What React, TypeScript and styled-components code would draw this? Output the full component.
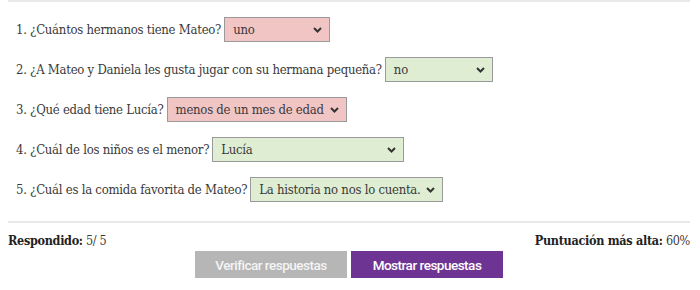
import React from "react";
import styled, { createGlobalStyle } from "styled-components";

const Global = createGlobalStyle`
  html, body { margin: 0; padding: 0; background: #fff; }
  body { font-family: "DejaVu Serif Condensed", "DejaVu Serif", "Liberation Serif", serif; color: #3a3a3a; }
`;

const Page = styled.div`
  margin: 0 10px 0 8px;
  border-top: 2px solid #e9e9e9;
  padding-top: 15px;
`;

const Questions = styled.ol`
  list-style: none;
  margin: 0;
  padding: 0 0 0 8px;
  display: flex;
  flex-direction: column;
  gap: 15px;
`;

const Row = styled.li`
  display: flex;
  align-items: center;
  gap: 3px;
  height: 25px;
  font-size: 13px;
  letter-spacing: -0.25px;
  white-space: nowrap;
`;

const SelectBox = styled.div<{ $ok: boolean; $w: number }>`
  box-sizing: border-box;
  width: ${(p) => p.$w}px;
  height: 25px;
  display: flex;
  align-items: center;
  justify-content: space-between;
  padding: 0 7px 0 8px;
  border: 1px solid #9a9a9a;
  background: ${(p) => (p.$ok ? "#dfeed3" : "#f2c5c5")};
  color: #3a3a3a;
  font-size: 13px;
  white-space: nowrap;
`;

const Divider = styled.hr`
  border: none;
  border-top: 2px solid #e9e9e9;
  margin: 19px 0 0 0;
`;

const Stats = styled.div`
  display: flex;
  justify-content: space-between;
  font-size: 12.5px;
  letter-spacing: -0.3px;
  margin-top: 10px;
  color: #3a3a3a;
  b { color: #222; }
`;

const Buttons = styled.div`
  display: flex;
  justify-content: center;
  gap: 4px;
  margin-top: 3px;
`;

const Btn = styled.button<{ $primary?: boolean }>`
  width: 152px;
  height: 27px;
  border: none;
  font-family: Roboto, "Liberation Sans", sans-serif;
  font-size: 13.5px;
  font-weight: 500;
  letter-spacing: -0.5px;
  color: ${(p) => (p.$primary ? "#fff" : "#f4f4f4")};
  background: ${(p) => (p.$primary ? "#6e3493" : "#b6b6b6")};
`;

const Chevron = () => (
  <svg width="9" height="6" viewBox="0 0 9 6">
    <path d="M1 1 L4.5 4.5 L8 1" fill="none" stroke="#333" strokeWidth="2" />
  </svg>
);

const items = [
  { q: "1. ¿Cuántos hermanos tiene Mateo?", a: "uno", ok: false, w: 106 },
  { q: "2. ¿A Mateo y Daniela les gusta jugar con su hermana pequeña?", a: "no", ok: true, w: 108 },
  { q: "3. ¿Qué edad tiene Lucía?", a: "menos de un mes de edad", ok: false, w: 180 },
  { q: "4. ¿Cuál de los niños es el menor?", a: "Lucía", ok: true, w: 192 },
  { q: "5. ¿Cuál es la comida favorita de Mateo?", a: "La historia no nos lo cuenta.", ok: true, w: 193 },
];

export default function App() {
  return (
    <Page>
      <Global />
      <Questions>
        {items.map((it) => (
          <Row key={it.q}>
            <span>{it.q}</span>
            <SelectBox $ok={it.ok} $w={it.w}>
              <span>{it.a}</span>
              <Chevron />
            </SelectBox>
          </Row>
        ))}
      </Questions>
      <Divider />
      <Stats>
        <span><b>Respondido:</b> 5/ 5</span>
        <span><b>Puntuación más alta:</b> 60%</span>
      </Stats>
      <Buttons>
        <Btn>Verificar respuestas</Btn>
        <Btn $primary>Mostrar respuestas</Btn>
      </Buttons>
    </Page>
  );
}
